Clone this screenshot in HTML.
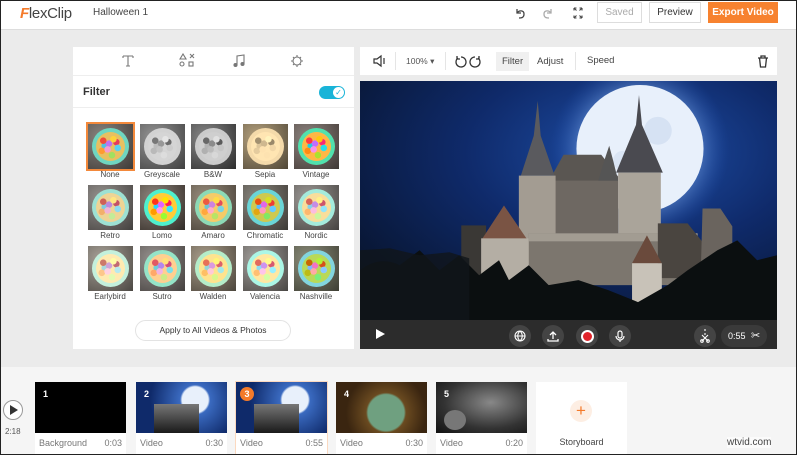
<!DOCTYPE html>
<html><head><meta charset="utf-8"><style>
*{box-sizing:border-box;margin:0;padding:0}
body{width:797px;height:455px;overflow:hidden;background:#ebebeb;font-family:"Liberation Sans",sans-serif;position:relative;font-size:11px;color:#333}
.abs{position:absolute}
.hdr{left:0;top:0;width:797px;height:30px;background:#fff;border-bottom:1px solid #ddd}
.btn{position:absolute;top:2px;height:21px;border:1px solid #ddd;background:#fff;font-size:10px;display:flex;align-items:center;justify-content:center}
.panel{left:73px;top:47px;width:281px;height:302px;background:#fff}
.th{position:absolute;width:45px;height:45px;background:radial-gradient(circle at 30% 30%,#8a8580,#55504c 70%,#3d3a37);overflow:hidden}
.th .b{position:absolute;left:4px;top:4px;width:37px;height:37px;border-radius:50%;background:#6fd6c0;padding:4px}
.th .c{width:100%;height:100%;border-radius:50%;background:
radial-gradient(circle at 25% 30%,#f04a3a 0 3px,transparent 3.5px),
radial-gradient(circle at 60% 25%,#ffd23a 0 3px,transparent 3.5px),
radial-gradient(circle at 75% 55%,#5ad0f0 0 3px,transparent 3.5px),
radial-gradient(circle at 40% 60%,#f59ad0 0 3px,transparent 3.5px),
radial-gradient(circle at 55% 80%,#a0e060 0 3px,transparent 3.5px),
radial-gradient(circle at 20% 65%,#ff9a30 0 3px,transparent 3.5px),
radial-gradient(circle at 45% 40%,#c070f0 0 3px,transparent 3.5px),
radial-gradient(circle at 70% 35%,#e83a5a 0 3px,transparent 3.5px),
radial-gradient(circle at 30% 48%,#50c0e0 0 3px,transparent 3.5px),
#e8c060}
.lb{position:absolute;width:52px;text-align:center;font-size:8px;color:#444}
.tb{left:360px;top:47px;width:417px;height:28px;background:#fff}
.clip{position:absolute;top:382px;width:91px;height:73px;background:#fff}
.clip .im{height:51px;position:relative}
.clip .n{position:absolute;left:8px;top:7px;color:#fff;font-size:9px;font-weight:bold}
.clip .f{display:flex;justify-content:space-between;padding:5px 4px 0 4px;font-size:9px;color:#777}
.cb{position:absolute;top:325px;width:22px;height:22px;border-radius:50%;background:#444;display:flex;align-items:center;justify-content:center}
</style></head><body>
<div class="abs hdr"></div>
<div class="abs" style="left:20px;top:5px;font-size:15px;color:#444;letter-spacing:-0.3px"><span style="color:#f47a2a;font-weight:bold;font-style:italic">F</span>lexClip</div>
<div class="abs" style="left:93px;top:7px;font-size:10px;color:#444">Halloween 1</div>
<svg class="abs" style="left:514px;top:6px" width="80" height="14" viewBox="0 0 80 14" fill="none" stroke="#444" stroke-width="1.3">
<path d="M3 3v4h4M3 7c2-3 7-3 7 1s-3 4-5 4"/><path d="M37 3v4h-4M37 7c-2-3-7-3-7 1s3 4 5 4" stroke="#aaa"/>
<path d="M60 2h2.5M60 2v2.5M68 2h-2.5M68 2v2.5M60 12h2.5M60 12v-2.5M68 12h-2.5M68 12v-2.5M60.5 2.5l2 2M67.5 2.5l-2 2M60.5 11.5l2-2M67.5 11.5l-2-2" stroke-width="1.1"/></svg>
<div class="btn" style="left:597px;width:45px;color:#aaa">Saved</div>
<div class="btn" style="left:649px;width:52px;color:#333">Preview</div>
<div class="btn" style="left:708px;width:70px;background:#f7822f;border-color:#f7822f;color:#fff;font-weight:bold">Export Video</div>

<div class="abs panel"></div>
<div class="abs" style="left:73px;top:75px;width:281px;height:1px;background:#eee"></div>
<div class="abs" style="left:73px;top:107px;width:281px;height:1px;background:#eee"></div>
<svg class="abs" style="left:120px;top:53px" width="190" height="16" viewBox="0 0 190 16" fill="none" stroke="#777" stroke-width="1.1">
<path d="M3 3h10M8 3v10M6 13h4M3 3v2M13 3v2"/>
<path d="M60 6l3-5 3 5z M70 1l4 4M74 1l-4 4"/><circle cx="62" cy="11" r="2"/><rect x="69" y="9" width="4" height="4"/>
<path d="M117 12V3l7-1v9"/><circle cx="115.5" cy="12" r="1.5" fill="#777"/><circle cx="122.5" cy="11" r="1.5" fill="#777"/>
<circle cx="177" cy="8" r="4"/><path d="M177 2v2M177 12v2M171 8h2M181 8h2M173 4l1.4 1.4M181 4l-1.4 1.4M173 12l1.4-1.4M181 12l-1.4-1.4"/></svg>
<div class="abs" style="left:83px;top:86px;font-size:11px;font-weight:bold;color:#333">Filter</div>
<div class="abs" style="left:319px;top:86px;width:26px;height:13px;border-radius:7px;background:#19b4d8"></div>
<div class="abs" style="left:333px;top:87px;width:11px;height:11px;border-radius:50%;background:#fff;font-size:8px;color:#19b4d8;text-align:center;line-height:11px">✓</div>

<div class="th" style="left:88px;top:124px;outline:2px solid #f3893b"><div class="b"><div class="c"></div></div></div>
<div class="th" style="left:140px;top:124px;filter:grayscale(1) brightness(1.1)"><div class="b"><div class="c"></div></div></div>
<div class="th" style="left:191px;top:124px;filter:grayscale(1) contrast(1.2)"><div class="b"><div class="c"></div></div></div>
<div class="th" style="left:243px;top:124px;filter:sepia(1)"><div class="b"><div class="c"></div></div></div>
<div class="th" style="left:294px;top:124px;filter:saturate(1.4) hue-rotate(-10deg)"><div class="b"><div class="c"></div></div></div>
<div class="th" style="left:88px;top:185px;filter:saturate(.6) brightness(1.1)"><div class="b"><div class="c"></div></div></div>
<div class="th" style="left:140px;top:185px;filter:saturate(1.3) contrast(1.2)"><div class="b"><div class="c"></div></div></div>
<div class="th" style="left:191px;top:185px;filter:sepia(.3) saturate(1.2)"><div class="b"><div class="c"></div></div></div>
<div class="th" style="left:243px;top:185px;filter:hue-rotate(15deg) saturate(1.1)"><div class="b"><div class="c"></div></div></div>
<div class="th" style="left:294px;top:185px;filter:saturate(.6) brightness(1.15)"><div class="b"><div class="c"></div></div></div>
<div class="th" style="left:88px;top:246px;filter:sepia(.3) saturate(.6) brightness(1.15)"><div class="b"><div class="c"></div></div></div>
<div class="th" style="left:140px;top:246px;filter:saturate(.7) brightness(1.1) hue-rotate(-10deg)"><div class="b"><div class="c"></div></div></div>
<div class="th" style="left:191px;top:246px;filter:sepia(.4) brightness(1.1)"><div class="b"><div class="c"></div></div></div>
<div class="th" style="left:243px;top:246px;filter:saturate(.6) brightness(1.2)"><div class="b"><div class="c"></div></div></div>
<div class="th" style="left:294px;top:246px;filter:sepia(.2) hue-rotate(30deg) saturate(1.2)"><div class="b"><div class="c"></div></div></div>
<div class="lb" style="left:84px;top:170px">None</div><div class="lb" style="left:136px;top:170px">Greyscale</div><div class="lb" style="left:187px;top:170px">B&amp;W</div><div class="lb" style="left:239px;top:170px">Sepia</div><div class="lb" style="left:290px;top:170px">Vintage</div>
<div class="lb" style="left:84px;top:231px">Retro</div><div class="lb" style="left:136px;top:231px">Lomo</div><div class="lb" style="left:187px;top:231px">Amaro</div><div class="lb" style="left:239px;top:231px">Chromatic</div><div class="lb" style="left:290px;top:231px">Nordic</div>
<div class="lb" style="left:84px;top:292px">Earlybird</div><div class="lb" style="left:136px;top:292px">Sutro</div><div class="lb" style="left:187px;top:292px">Walden</div><div class="lb" style="left:239px;top:292px">Valencia</div><div class="lb" style="left:290px;top:292px">Nashville</div>
<div class="abs" style="left:135px;top:320px;width:156px;height:21px;border:1px solid #e3e3e3;border-radius:11px;font-size:8.5px;color:#333;text-align:center;line-height:19px">Apply to All Videos &amp; Photos</div>

<div class="abs tb"></div>
<svg class="abs" style="left:372px;top:54px" width="16" height="14" viewBox="0 0 16 14" fill="none" stroke="#333" stroke-width="1.2"><path d="M2 5h3l4-3v10l-4-3H2z M12 4v6"/></svg>
<div class="abs" style="left:395px;top:52px;width:1px;height:18px;background:#e5e5e5"></div>
<div class="abs" style="left:406px;top:56px;font-size:8.5px;color:#555">100% ▾</div>
<div class="abs" style="left:445px;top:52px;width:1px;height:18px;background:#e5e5e5"></div>
<svg class="abs" style="left:454px;top:55px" width="30" height="13" viewBox="0 0 30 13" fill="none" stroke="#333" stroke-width="1.3"><path d="M4 3a5 5 0 1 0 3-1M3 1v3h3"/><path d="M24 3a5 5 0 1 1-3-1M25 1v3h-3"/></svg>
<div class="abs" style="left:496px;top:52px;width:33px;height:19px;background:#f0f0f0"></div>
<div class="abs" style="left:502px;top:56px;font-size:9.5px;color:#444">Filter</div>
<div class="abs" style="left:537px;top:56px;font-size:9.5px;color:#444">Adjust</div>
<div class="abs" style="left:575px;top:52px;width:1px;height:18px;background:#e5e5e5"></div>
<div class="abs" style="left:587px;top:55px;font-size:9.5px;color:#444">Speed</div>
<svg class="abs" style="left:757px;top:55px" width="12" height="13" viewBox="0 0 12 13" fill="none" stroke="#333" stroke-width="1.3"><path d="M1 3h10M4 3V1h4v2M2.5 3l1 9h5l1-9"/></svg>

<svg class="abs" style="left:360px;top:81px" width="417" height="239" viewBox="0 0 420 240" preserveAspectRatio="none">
<defs><radialGradient id="sky" cx="0.65" cy="0.3" r="0.8"><stop offset="0" stop-color="#1e4fa8"/><stop offset=".5" stop-color="#0f2a6a"/><stop offset="1" stop-color="#081530"/></radialGradient>
<radialGradient id="glow" cx=".5" cy=".5" r=".5"><stop offset=".55" stop-color="#8fb8f0" stop-opacity=".7"/><stop offset="1" stop-color="#2050b0" stop-opacity="0"/></radialGradient></defs>
<rect width="420" height="240" fill="url(#sky)"/>
<circle cx="282" cy="68" r="90" fill="url(#glow)"/>
<circle cx="282" cy="68" r="64" fill="#e8f0fb"/>
<circle cx="300" cy="50" r="14" fill="#c9d8ee" opacity=".6"/><circle cx="265" cy="80" r="10" fill="#d0ddf0" opacity=".6"/>
<path d="M195 92l10-18h38l17 22v65h-65z" fill="#5a5652"/>
<rect x="195" y="100" width="65" height="60" fill="#6e6862"/>
<path d="M179 20l3 35 14 40h-34l13-40z" fill="#5a5a5e"/>
<rect x="160" y="95" width="37" height="70" fill="#a39c92"/>
<path d="M251 65l4 15 5 20h-20l6-20z" fill="#555"/>
<path d="M281 14l3 30 21 48h-47l20-48z" fill="#4a4a50"/>
<rect x="260" y="92" width="43" height="75" fill="#aaa49a"/>
<rect x="102" y="145" width="25" height="60" fill="#3a3835"/>
<path d="M145 125l24 35h-47z" fill="#7a5444"/>
<rect x="122" y="158" width="50" height="45" fill="#b4aea4"/>
<rect x="170" y="153" width="170" height="52" fill="#7c766e"/>
<rect x="170" y="153" width="170" height="8" fill="#a29c92"/>
<path d="M300 143h30l20 25v30h-50z" fill="#4a4540"/>
<path d="M289 155l15 28h-30z" fill="#6a4a3c"/><rect x="274" y="183" width="30" height="40" fill="#c8c2b8"/>
<path d="M345 128h18l12 18v54h-32z" fill="#6a645e"/>
<path d="M0 190 Q20 175 40 185 L60 170 80 190 100 175 120 195 140 180 150 200 170 185 190 205 220 200 250 210 280 222 310 205 330 190 360 170 380 160 400 180 420 175 V240 H0z" fill="#0b0f10"/>
<path d="M0 170 L30 168 60 175 90 172 110 178 V240 H0z" fill="#10151a" opacity=".8"/>
</svg>
<div class="abs" style="left:360px;top:320px;width:417px;height:29px;background:#2c2c2c"></div>
<svg class="abs" style="left:375px;top:328px" width="10" height="12"><path d="M1 1l9 5-9 5z" fill="#fff"/></svg>
<div class="cb" style="left:509px"><svg width="12" height="12" viewBox="0 0 12 12" fill="none" stroke="#fff" stroke-width="1.1"><circle cx="6" cy="6" r="5"/><path d="M1 6h10M6 1c-3 3-3 7 0 10M6 1c3 3 3 7 0 10"/></svg></div>
<div class="cb" style="left:542px"><svg width="12" height="12" viewBox="0 0 12 12" fill="none" stroke="#fff" stroke-width="1.3"><path d="M6 9V2M3 5l3-3 3 3M1 9v2h10V9"/></svg></div>
<div class="cb" style="left:576px"><div style="width:13px;height:13px;border-radius:50%;border:2px solid #fff;background:#e0242b"></div></div>
<div class="cb" style="left:609px"><svg width="12" height="13" viewBox="0 0 12 13" fill="none" stroke="#fff" stroke-width="1.2"><rect x="4" y="1" width="4" height="7" rx="2"/><path d="M2 6a4 4 0 0 0 8 0M6 10v2"/></svg></div>
<div class="cb" style="left:694px"><svg width="12" height="14" viewBox="0 0 12 14" fill="none" stroke="#fff" stroke-width="1.1"><path d="M6 0v2M6 4v2M3 6l6 6M9 6l-6 6"/><circle cx="3" cy="12" r="1.3"/><circle cx="9" cy="12" r="1.3"/></svg></div>
<div class="abs" style="left:721px;top:325px;width:46px;height:22px;border-radius:11px;background:#3a3a3a;color:#fff;font-size:9px;line-height:22px;padding-left:7px">0:55 <span style="font-size:11px;margin-left:3px">✂</span></div>

<div class="abs" style="left:0;top:367px;width:797px;height:88px;background:#f5f5f5"></div>
<div class="abs" style="left:3px;top:400px;width:20px;height:20px;border-radius:50%;border:1.5px solid #999;background:#fff"></div>
<svg class="abs" style="left:10px;top:405px" width="8" height="10"><path d="M0 0l8 5-8 5z" fill="#333"/></svg>
<div class="abs" style="left:5px;top:427px;font-size:8px;color:#555">2:18</div>
<div class="clip" style="left:35px"><div class="im" style="background:#000"><span class="n">1</span></div><div class="f"><span>Background</span><span>0:03</span></div></div>
<div class="clip" style="left:136px"><div class="im" style="background:radial-gradient(circle at 65% 35%,#e8f0fb 0 13px,#3a6ac0 15px,#0f2a6a 45px)"><span class="n">2</span><div style="position:absolute;left:18px;top:22px;width:45px;height:29px;background:linear-gradient(#777,#1a1a1a)"></div></div><div class="f"><span>Video</span><span>0:30</span></div></div>
<div class="clip" style="left:236px;outline:1px solid #fbd9c0"><div class="im" style="background:radial-gradient(circle at 65% 35%,#e8f0fb 0 13px,#3a6ac0 15px,#0f2a6a 45px)"><span class="n" style="left:4px;top:5px;width:14px;height:14px;border-radius:50%;background:#f47a2a;text-align:center;line-height:14px">3</span><div style="position:absolute;left:18px;top:22px;width:45px;height:29px;background:linear-gradient(#777,#1a1a1a)"></div></div><div class="f"><span>Video</span><span>0:55</span></div></div>
<div class="clip" style="left:336px"><div class="im" style="background:radial-gradient(circle at 55% 60%,#6fa080 0 18px,#6a4a20 20px,#3a2510 40px)"><span class="n">4</span></div><div class="f"><span>Video</span><span>0:30</span></div></div>
<div class="clip" style="left:436px"><div class="im" style="background:radial-gradient(ellipse at 60% 40%,#888,#333 60%,#111)"><span class="n">5</span><div style="position:absolute;left:8px;top:28px;width:22px;height:20px;border-radius:50%;background:#777"></div></div><div class="f"><span>Video</span><span>0:20</span></div></div>
<div class="abs" style="left:536px;top:382px;width:91px;height:73px;background:#fff"></div>
<div class="abs" style="left:570px;top:400px;width:22px;height:22px;border-radius:50%;background:#fdeee3;color:#f47a2a;font-size:17px;text-align:center;line-height:21px">+</div>
<div class="abs" style="left:536px;top:437px;width:91px;text-align:center;font-size:9px;color:#444">Storyboard</div>
<div class="abs" style="left:727px;top:437px;font-size:10px;color:#444;background:rgba(255,255,255,.6)">wtvid.com</div>
<div class="abs" style="left:0;top:0;width:797px;height:455px;border:1px solid #222;pointer-events:none"></div>
</body></html>
